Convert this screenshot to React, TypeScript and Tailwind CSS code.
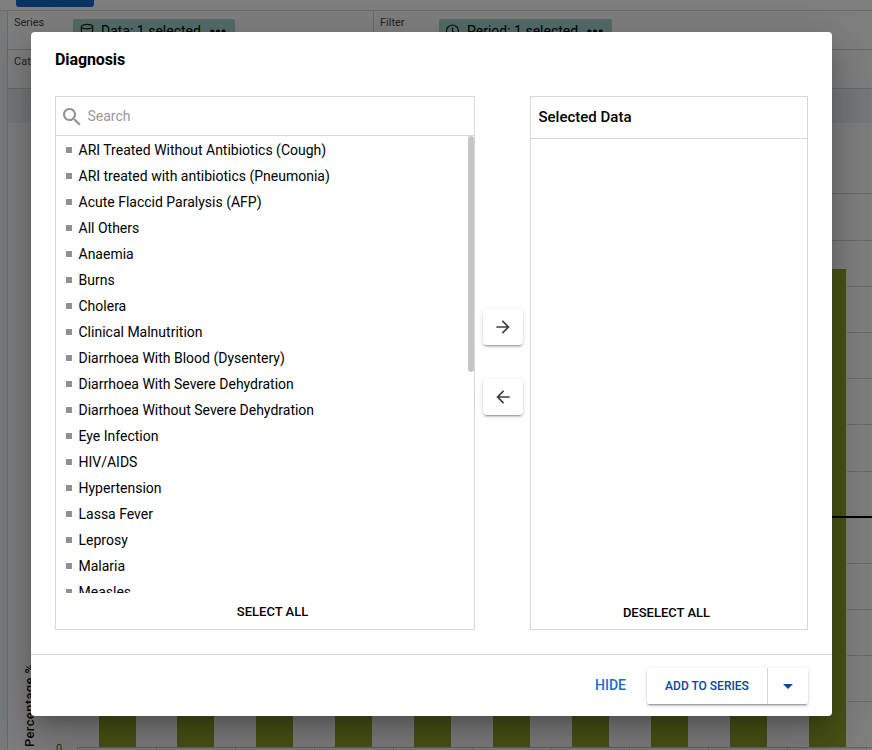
import React from 'react';

const ITEMS = [
  'ARI Treated Without Antibiotics (Cough)',
  'ARI treated with antibiotics (Pneumonia)',
  'Acute Flaccid Paralysis (AFP)',
  'All Others',
  'Anaemia',
  'Burns',
  'Cholera',
  'Clinical Malnutrition',
  'Diarrhoea With Blood (Dysentery)',
  'Diarrhoea With Severe Dehydration',
  'Diarrhoea Without Severe Dehydration',
  'Eye Infection',
  'HIV/AIDS',
  'Hypertension',
  'Lassa Fever',
  'Leprosy',
  'Malaria',
  'Measles',
];

const BAR_X = [99, 177, 256, 335, 414, 493, 572, 651, 730, 809];
const GRID_Y = [193, 240, 286, 332, 378, 424, 471, 563, 609, 655, 701];
const TICK_X = [77, 156, 235, 314, 393, 472, 551, 629, 708, 787, 866];

function Dots() {
  return (
    <svg width="16" height="5" viewBox="0 0 16 5" className="shrink-0">
      <circle cx="2.4" cy="2.5" r="2" />
      <circle cx="8" cy="2.5" r="2" />
      <circle cx="13.6" cy="2.5" r="2" />
    </svg>
  );
}

function DataIcon() {
  return (
    <svg width="14" height="16" viewBox="0 0 14 16" fill="none" stroke="#222" strokeWidth="1.3" className="shrink-0">
      <ellipse cx="7" cy="3.6" rx="5.6" ry="2.2" />
      <path d="M1.4 3.6v9.2c0 1.300 2.500 2.200 5.600 2.200s5.600-.9 5.600-2.200V3.600M1.400 8c0 1.300 2.500 2.200 5.600 2.200s5.600-.9 5.600-2.200" />
    </svg>
  );
}

function ClockIcon() {
  return (
    <svg width="14" height="14" viewBox="0 0 14 14" fill="none" stroke="#222" strokeWidth="1.2" className="shrink-0">
      <circle cx="6.500" cy="7" r="6" />
      <path d="M6.500 3.500v3.800l2.500 1.500" />
    </svg>
  );
}

function Chip({ icon, label }: { icon: React.ReactNode; label: string }) {
  return (
    <div className="flex h-6 items-center rounded-[2px] bg-[#a8dbd5] pl-[7px] pr-[9px] text-[14px] leading-6">
      <span className="flex w-[21px]">{icon}</span>
      <span className="mr-[9px] whitespace-nowrap text-black">{label}</span>
      <Dots />
    </div>
  );
}

function Chart() {
  return (
    <svg width="864" height="627" viewBox="8 123 864 627" className="block">
      <g fill="#d5d5d5">
        {GRID_Y.map((y) => (
          <rect key={y} x="77" y={y} width="795" height="1" />
        ))}
      </g>
      <rect x="846" y="269" width="1" height="478" fill="#fff" />
      {BAR_X.map((x) => (
        <rect key={x} x={x} y="269" width="37" height="478" fill="#94a72c" />
      ))}
      <rect x="77" y="516" width="795" height="2" fill="#000" />
      <rect x="77" y="747" width="795" height="1" fill="#c0c7d6" />
      {TICK_X.map((x) => (
        <rect key={x} x={x} y="747" width="1" height="3" fill="#c0c7d6" />
      ))}
      <text x="56" y="752" fontSize="11" fill="#555">0</text>
      <text transform="translate(34 747) rotate(-90)" fontSize="13" fontWeight="500" fill="#111" textLength="83">
        Percentage %
      </text>
    </svg>
  );
}

function Page() {
  return (
    <div className="flex h-[750px] w-[872px] flex-col">
      <div className="h-[11px] shrink-0 border-b border-[#d5d5d5] pl-4">
        <div className="h-[7px] w-[78px] rounded-b-[3px] bg-[#1467cc]" />
      </div>
      <div className="flex min-h-0 flex-1">
        <div className="w-2 shrink-0 border-r border-[#d5d5d5] bg-[#f3f5f7]" />
        <div className="flex w-[864px] flex-col text-[11px] text-[#4a4a4a]">
          <div className="flex h-[39px] shrink-0 border-b border-[#d5d5d5]">
            <div className="flex w-[366px] items-start border-r border-[#d5d5d5] pl-[6px] pt-2">
              <span className="w-[59px] leading-[8px]">Series</span>
              <Chip icon={<DataIcon />} label="Data: 1 selected" />
            </div>
            <div className="flex items-start pl-[6px] pt-2">
              <span className="w-[59px] leading-[8px]">Filter</span>
              <Chip icon={<ClockIcon />} label="Period: 1 selected" />
            </div>
          </div>
          <div className="h-[39px] shrink-0 border-b border-[#d5d5d5] pl-[6px] pt-[8px] leading-[8px]">Category</div>
          <div className="h-[34px] shrink-0 bg-[#edf0f4]" />
          <Chart />
        </div>
      </div>
    </div>
  );
}

const raised =
  'bg-white shadow-[0_3px_1px_-2px_rgba(0,0,0,0.2),0_2px_2px_0_rgba(0,0,0,0.14),0_1px_5px_0_rgba(0,0,0,0.12)]';

function ArrowButton({ d }: { d: string }) {
  return (
    <button className={'flex h-9 w-10 items-center justify-center rounded-[4px] ' + raised}>
      <svg width="20" height="20" viewBox="0 0 24 24" fill="#404040">
        <path d={d} />
      </svg>
    </button>
  );
}

function Dialog() {
  return (
    <div className="flex h-[684px] w-[801px] flex-col rounded-[4px] bg-white shadow-[0_11px_15px_-7px_rgba(0,0,0,0.2),0_24px_38px_3px_rgba(0,0,0,0.14),0_9px_46px_8px_rgba(0,0,0,0.12)]">
      <h2 className="h-16 shrink-0 pl-6 pt-4 text-[16px] font-bold leading-6 tracking-[-0.1px]">Diagnosis</h2>
      <div className="flex h-[534px] shrink-0 pl-6">
        <div className="flex w-[420px] flex-col border border-[#d8d8d8]">
          <div className="flex h-[39px] shrink-0 items-center border-b border-[#d8d8d8] pl-1">
            <svg width="24" height="24" viewBox="0 0 24 24" fill="#909090" className="mt-px">
              <path d="M15.500 14h-.79l-.28-.27C15.410 12.590 16 11.110 16 9.500 16 5.910 13.090 3 9.500 3S3 5.910 3 9.500 5.910 16 9.500 16c1.610 0 3.090-.59 4.230-1.570l.27.28v.79l5 4.990L20.490 19l-4.990-5zm-6 0C7.010 14 5 11.990 5 9.500S7.010 5 9.500 5 14 7.010 14 9.500 11.990 14 9.500 14z" />
            </svg>
            <span className="ml-[3.500px] text-[14px] text-[#999]">Search</span>
          </div>
          <div className="flex h-[457px] shrink-0 overflow-hidden">
            <ul className="flex-1 pt-[1px]">
              {ITEMS.map((item) => (
                <li key={item} className="flex h-[26px] items-center pl-[10px] text-[14px]">
                  <span className="mr-[6.500px] size-[6px] bg-[#909090]" />
                  {item}
                </li>
              ))}
            </ul>
            <div className="h-[236px] w-[6px] rounded-full bg-[#c4c5c7]" />
          </div>
          <button className="mt-[9px] h-5 pl-[15px] text-[13px] font-medium">SELECT ALL</button>
        </div>
        <div className="flex w-[55px] flex-col gap-[34px] pl-2 pt-[213px]">
          <ArrowButton d="M12 4l-1.410 1.410L16.170 11H4v2h12.170l-5.580 5.590L12 20l8-8z" />
          <ArrowButton d="M20 11H7.830l5.590-5.590L12 4l-8 8 8 8 1.410-1.410L7.830 13H20v-2z" />
        </div>
        <div className="flex w-[278px] flex-col border border-[#d8d8d8]">
          <div className="h-[42px] shrink-0 border-b border-[#d8d8d8] pl-[7.500px] pt-2 text-[15px] font-medium leading-6">Selected Data</div>
          <div className="flex-1" />
          <button className="mb-[6px] h-5 pr-[5px] text-[13px] font-medium">DESELECT ALL</button>
        </div>
      </div>
      <div className="mt-6 flex flex-1 items-start justify-end border-t border-[#d8d8d8] pr-6 pt-[13px]">
        <button className="mr-[21px] h-[34px] text-[14px] font-medium text-[#1a6dd0]">HIDE</button>
        <div className={'flex h-9 w-[161px] rounded-[2px] text-[#084797] ' + raised}>
          <button className="w-[121px] border-r border-[#d8d8d8] text-[12px] font-medium">ADD TO SERIES</button>
          <button className="flex flex-1 items-center justify-center">
            <svg width="10" height="5" viewBox="0 0 10 5" fill="currentColor">
              <path d="M0 0l5 5 5-5z" />
            </svg>
          </button>
        </div>
      </div>
    </div>
  );
}

export default function App() {
  return (
    <div className="relative h-[750px] w-[872px] overflow-hidden bg-white font-[Roboto,sans-serif] text-black">
      <Page />
      <div className="absolute inset-0 bg-black/50 pl-[31px] pt-8">
        <Dialog />
      </div>
    </div>
  );
}
